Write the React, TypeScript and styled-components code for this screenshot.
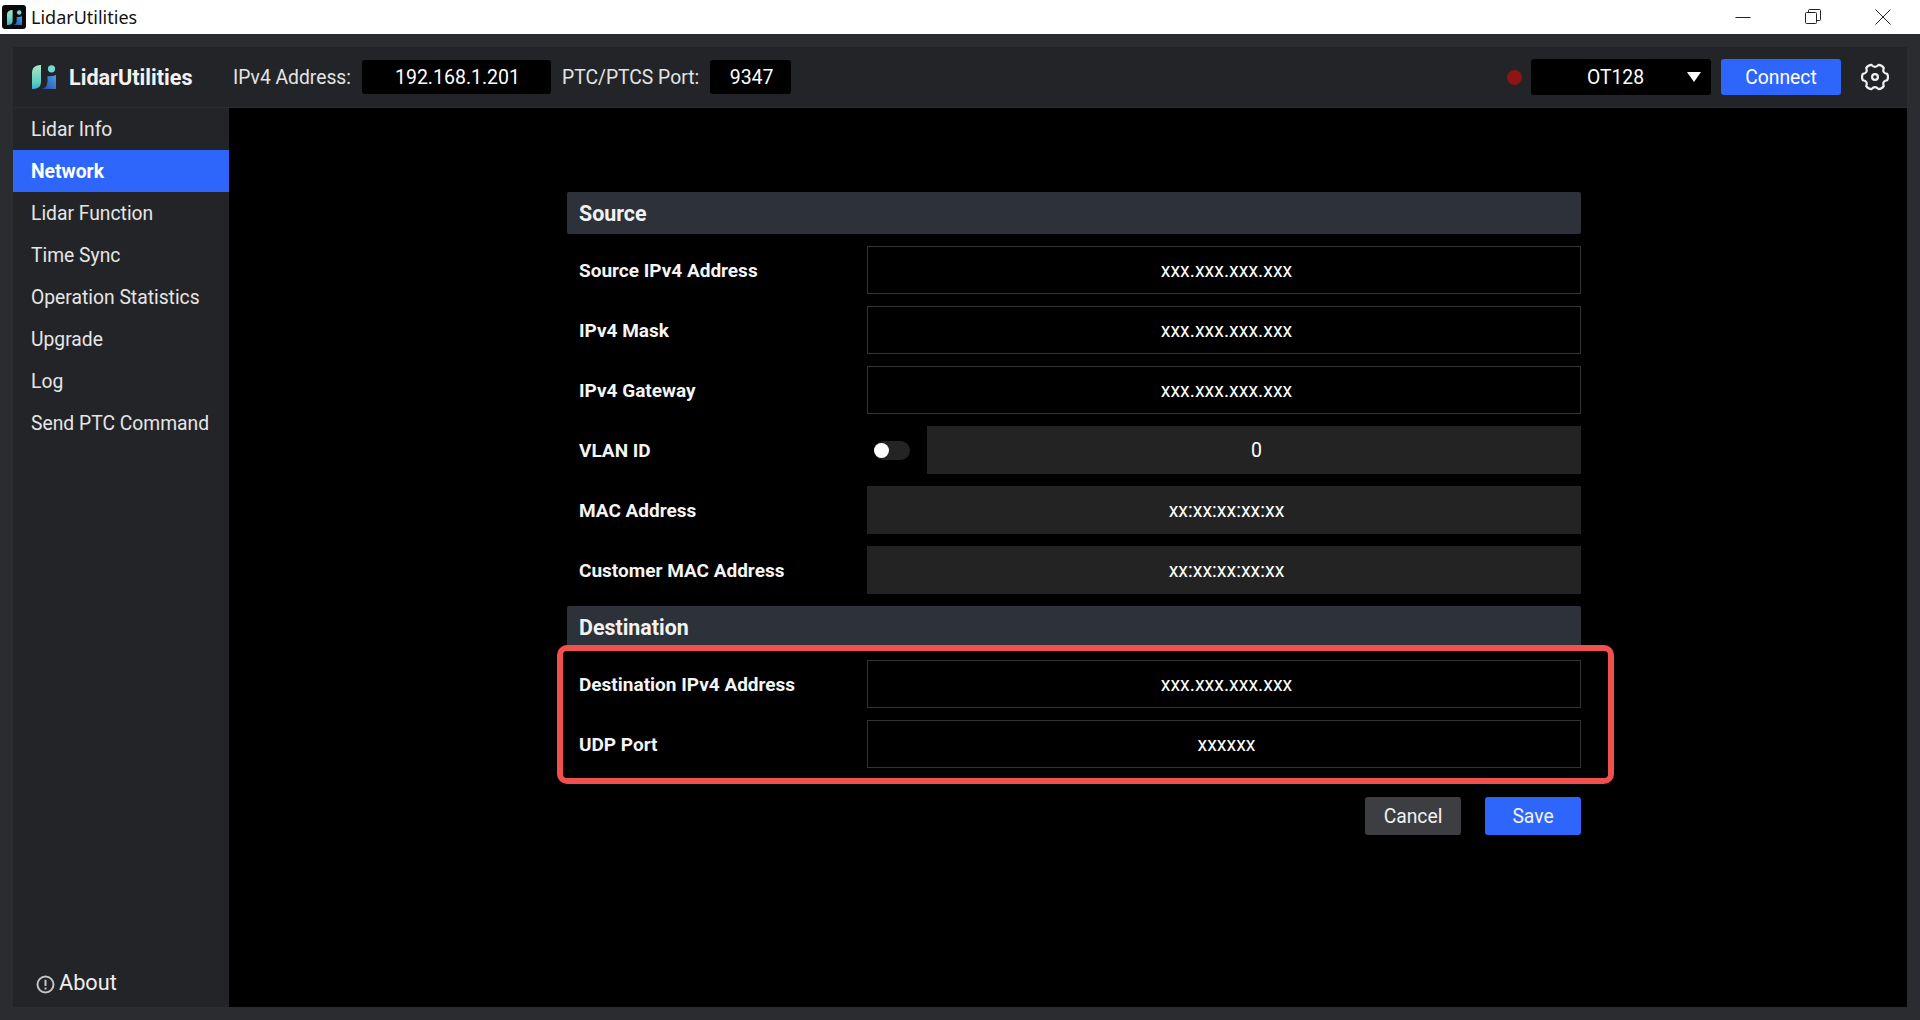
import React from "react";
import styled, { createGlobalStyle } from "styled-components";

const Global = createGlobalStyle`
  html, body { margin: 0; padding: 0; height: 100%; background: #2b2c2f; }
  #root { height: 1020px; }
  * { box-sizing: border-box; }
`;

const Page = styled.div`
  width: 1920px; height: 1020px; display: flex; flex-direction: column;
  overflow: hidden; background: #2b2c2f; color: #fff;
  font-family: Roboto, "Liberation Sans", sans-serif; font-size: 19.3px;
`;
const TitleBar = styled.div`
  height: 34px; flex: none; background: #fff; color: #111; display: flex; align-items: center;
  padding: 0 2px; font-family: "Noto Sans", sans-serif; font-size: 18px;
`;
const TitleText = styled.span` margin-left: 5px; `;
const WinControls = styled.div` margin-left: auto; display: flex; align-items: center; `;
const WinButton = styled.div` width: 70px; height: 34px; display: flex; align-items: center; justify-content: center; `;
const Shell = styled.div`
  flex: 1; min-height: 0; margin: 13px 13px 13px 13px; display: flex; flex-direction: column;
  background: #232427;
`;
const Header = styled.header`
  height: 61px; flex: none; display: flex; align-items: center; padding: 0 18px 0 19px;
  background: #232427; border-bottom: 1px solid #2c2d30;
`;
const Brand = styled.div` display: flex; align-items: center; width: 201px; gap: 13px; font-size: 21.6px; font-weight: 700; color: #f2f2f2; `;
const Label = styled.span` color: #e4e4e4; `;
const Field = styled.div<{ $w: number }>`
  width: ${p => p.$w}px; height: 34px; background: #000; border-radius: 3px; display: flex; align-items: center;
  justify-content: center; margin-left: 11px; margin-right: 11px; padding-left: 2px; font-size: 19.5px;
`;
const StatusDot = styled.span` width: 15px; height: 15px; border-radius: 50%; background: #8f1414; margin-left: auto; margin-right: 9px; `;
const Select = styled.div`
  width: 180px; height: 36px; background: #000; border-radius: 3px; display: flex; align-items: center;
  padding-left: 56px; position: relative;
`;
const Caret = styled.span`
  margin-left: auto; margin-right: 10px; width: 0; height: 0;
  border-left: 7.5px solid transparent; border-right: 7.5px solid transparent; border-top: 10px solid #fff;
`;
const ConnectButton = styled.button`
  width: 120px; height: 36px; margin-left: 10px; margin-right: 20px; border: 0; border-radius: 3px;
  background: #2e66fb; color: #fff; font: inherit;
`;
const Body = styled.div` flex: 1; min-height: 0; display: flex; `;
const Side = styled.nav` width: 216px; flex: none; display: flex; flex-direction: column; background: #232427; `;
const NavItem = styled.div<{ $active?: boolean }>`
  height: 42px; display: flex; align-items: center; padding-left: 18px;
  background: ${p => (p.$active ? "#2e66fb" : "transparent")};
  font-weight: ${p => (p.$active ? 700 : 400)};
  color: ${p => (p.$active ? "#fff" : "#e6e6e6")};
`;
const About = styled.div`
  margin-top: auto; height: 50px; display: flex; align-items: center; gap: 4px; padding-left: 23px;
  font-size: 21.7px; color: #eee;
`;
const AboutIcon = styled.svg` margin-top: 4px; flex: none; `;
const Main = styled.main` flex: 1; background: #000; padding: 84px 0 0 338px; `;
const Form = styled.div` width: 1014px; display: flex; flex-direction: column; `;
const SectionHead = styled.div<{ $gap?: boolean }>`
  height: 42px; display: flex; align-items: center; padding-left: 12px; background: #2d3139; border-radius: 2px;
  margin-top: ${p => (p.$gap ? "12px" : "0")};
  font-size: 21.4px; font-weight: 700; color: #f2f2f2;
`;
const Row = styled.div` height: 48px; margin-top: 12px; display: flex; align-items: center; `;
const RowLabel = styled.div` width: 300px; padding-left: 12px; font-size: 19px; font-weight: 700; color: #f4f4f4; `;
const Value = styled.div<{ $filled?: boolean }>`
  flex: 1; height: 48px; display: flex; align-items: center; justify-content: center; padding-left: 5px; font-size: 19.5px;
  background: ${p => (p.$filled ? "#232323" : "#000")};
  border: 1px solid ${p => (p.$filled ? "#232323" : "#333")};
`;
const Switch = styled.span`
  width: 36px; height: 19px; border-radius: 10px; background: #242424; position: relative; margin: 0 17px 0 7px; flex: none;
  &::after { content: ""; position: absolute; left: 0; top: 2px; width: 15px; height: 15px; border-radius: 50%; background: #fff; }
`;
const Highlighted = styled.div` position: relative; `;
const RedBox = styled.div`
  position: absolute; left: -10px; right: -33px; top: -3px; bottom: -16px;
  border: 6px solid #f0504e; border-radius: 10px; pointer-events: none;
`;
const Actions = styled.div` margin-top: 29px; display: flex; justify-content: flex-end; gap: 24px; `;
const Action = styled.button<{ $primary?: boolean }>`
  width: 96px; height: 38px; border: 0; border-radius: 3px; font: inherit; color: #f2f2f2;
  background: ${p => (p.$primary ? "#2e66fb" : "#3c3e41")};
`;

const LogoMark = ({ size, id }: { size: number; id: string }) => (
  <svg width={size} height={size} viewBox="0 0 24 24">
    <defs>
      <linearGradient id={id + "a"} x1="0" y1="0" x2="0" y2="1">
        <stop offset="0" stopColor="#a8e8c4" /><stop offset="0.7" stopColor="#5fd0c0" /><stop offset="1" stopColor="#3fa8d0" />
      </linearGradient>
      <linearGradient id={id + "b"} x1="0" y1="1" x2="1" y2="0">
        <stop offset="0" stopColor="#24499c" /><stop offset="1" stopColor="#4aa0ee" />
      </linearGradient>
    </defs>
    <path d="M0 7 Q0 1 8 0 L9 0 V17 Q9 24 1 24 L0 24 Z" fill={`url(#${id}a)`} />
    <path d="M9 24 Q14.5 24 15.5 17 V11 Q19 12 24 10 V24 Z" fill={`url(#${id}b)`} />
    <circle cx="19.5" cy="3.8" r="3.6" fill="#6fdcd8" />
  </svg>
);

const polar = (deg: number, r: number) => {
  const a = (deg * Math.PI) / 180;
  return `${(12 + r * Math.cos(a)).toFixed(2)} ${(12 + r * Math.sin(a)).toFixed(2)}`;
};
const gearPath = (() => {
  let d = `M${polar(-14, 10.8)}`;
  for (let k = 0; k < 6; k++) {
    const a = k * 60;
    d += ` Q${polar(a, 11.8)} ${polar(a + 14, 10.8)}`;
    d += ` Q${polar(a + 30, 6.9)} ${polar(a + 46, 10.8)}`;
  }
  return d + "Z";
})();

const rows1 = [
  ["Source IPv4 Address", "xxx.xxx.xxx.xxx"],
  ["IPv4 Mask", "xxx.xxx.xxx.xxx"],
  ["IPv4 Gateway", "xxx.xxx.xxx.xxx"],
];
const nav = ["Lidar Info", "Network", "Lidar Function", "Time Sync", "Operation Statistics", "Upgrade", "Log", "Send PTC Command"];

const AppIcon = styled.span`
  width: 24px; height: 24px; background: #0a0a0a; border-radius: 3px; display: flex; align-items: center; justify-content: center;
`;

export default function App() {
  return (
    <Page>
      <Global />
      <TitleBar>
        <AppIcon><LogoMark size={15} id="t" /></AppIcon>
        <TitleText>LidarUtilities</TitleText>
        <WinControls>
          <WinButton><svg width="16" height="16" viewBox="0 0 16 16"><path d="M0.5 8.5H15.5" stroke="#222" /></svg></WinButton>
          <WinButton><svg width="16" height="16" viewBox="0 0 16 16" fill="none" stroke="#222"><rect x="0.5" y="3.5" width="11" height="11" rx="1" /><path d="M3.5 3.5V1.5a1 1 0 0 1 1-1h10a1 1 0 0 1 1 1v9a1 1 0 0 1-1 1h-3" /></svg></WinButton>
          <WinButton><svg width="16" height="16" viewBox="0 0 16 16"><path d="M0.5 0.5L15.5 15.5M15.5 0.5L0.5 15.5" stroke="#222" /></svg></WinButton>
        </WinControls>
      </TitleBar>
      <Shell>
        <Header>
          <Brand><LogoMark size={24} id="b" />LidarUtilities</Brand>
          <Label>IPv4 Address:</Label>
          <Field $w={189}>192.168.1.201</Field>
          <Label>PTC/PTCS Port:</Label>
          <Field $w={81}>9347</Field>
          <StatusDot />
          <Select>OT128<Caret /></Select>
          <ConnectButton>Connect</ConnectButton>
          <svg width="28" height="28" viewBox="0 0 24 24" fill="none" stroke="#f0f0f0" strokeWidth="1.9" strokeLinejoin="round">
            <path d={gearPath} />
            <circle cx="12" cy="12" r="2.5" />
          </svg>
        </Header>
        <Body>
          <Side>
            {nav.map(n => <NavItem key={n} $active={n === "Network"}>{n}</NavItem>)}
            <About>
              <AboutIcon width="19" height="19" viewBox="0 0 19 19" fill="none" stroke="#c4c4c4" strokeWidth="2">
                <circle cx="9.5" cy="9.5" r="8" /><path d="M9.5 4.8V11M9.5 12.5V14.4" />
              </AboutIcon>
              About
            </About>
          </Side>
          <Main>
            <Form>
              <SectionHead>Source</SectionHead>
              {rows1.map(([l, v]) => <Row key={l}><RowLabel>{l}</RowLabel><Value>{v}</Value></Row>)}
              <Row><RowLabel>VLAN ID</RowLabel><Switch /><Value $filled>0</Value></Row>
              <Row><RowLabel>MAC Address</RowLabel><Value $filled>xx:xx:xx:xx:xx</Value></Row>
              <Row><RowLabel>Customer MAC Address</RowLabel><Value $filled>xx:xx:xx:xx:xx</Value></Row>
              <SectionHead $gap>Destination</SectionHead>
              <Highlighted>
                <Row><RowLabel>Destination IPv4 Address</RowLabel><Value>xxx.xxx.xxx.xxx</Value></Row>
                <Row><RowLabel>UDP Port</RowLabel><Value>xxxxxx</Value></Row>
                <RedBox />
              </Highlighted>
              <Actions><Action>Cancel</Action><Action $primary>Save</Action></Actions>
            </Form>
          </Main>
        </Body>
      </Shell>
    </Page>
  );
}
